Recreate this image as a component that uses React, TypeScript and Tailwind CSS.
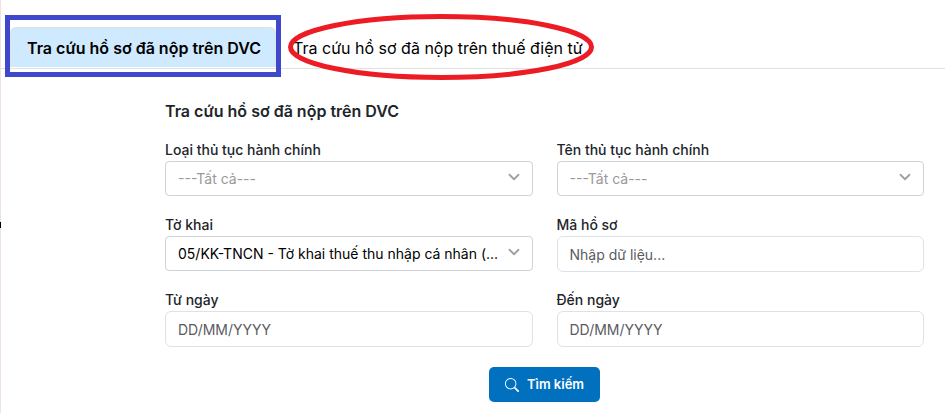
import { ChevronDown } from "lucide-react";
import { BsSearch } from "react-icons/bs";

type Field = {
  id: string;
  label: string;
  kind: "select" | "input";
  text: string;
  filled?: boolean;
};

const fields: Field[] = [
  { id: "loai-thu-tuc", label: "Loại thủ tục hành chính", kind: "select", text: "---Tất cả---" },
  { id: "ten-thu-tuc", label: "Tên thủ tục hành chính", kind: "select", text: "---Tất cả---" },
  {
    id: "to-khai",
    label: "Tờ khai",
    kind: "select",
    text: "05/KK-TNCN - Tờ khai thuế thu nhập cá nhân (...",
    filled: true,
  },
  { id: "ma-ho-so", label: "Mã hồ sơ", kind: "input", text: "Nhập dữ liệu..." },
  { id: "tu-ngay", label: "Từ ngày", kind: "input", text: "DD/MM/YYYY" },
  { id: "den-ngay", label: "Đến ngày", kind: "input", text: "DD/MM/YYYY" },
];

function FormField({ field }: { field: Field }) {
  return (
    <div className="flex flex-col min-w-0">
      <label htmlFor={field.id} className="text-sm leading-5 mb-px font-medium text-[#212529]">
        {field.label}
      </label>
      {field.kind === "select" ? (
        <div className="relative">
          <select
            id={field.id}
            className={`block w-full h-[35px] appearance-none rounded-[4px] border border-[#ced4da] bg-white pl-3 pr-6 text-sm text-ellipsis
              ${field.filled ? "text-black" : "text-[#999999]"}`}
          >
            <option>{field.text}</option>
          </select>
          <ChevronDown
            size={18}
            strokeWidth={2.4}
            className="absolute right-2.5 top-[7px] text-[#a0a0a0] pointer-events-none"
          />
        </div>
      ) : (
        <input
          id={field.id}
          type="text"
          placeholder={field.text}
          className="block w-full h-9 rounded-md border border-[#dee2e6] bg-white px-3 text-sm text-black placeholder:text-[#595c5f]"
        />
      )}
    </div>
  );
}

export default function App() {
  return (
    <div className="relative min-h-screen bg-white border-l border-[#f0e1e6] pt-[27px] font-['Inter','Liberation_Sans',sans-serif]">
      {/* Tabs */}
      <nav className="flex border-b border-[#dee2e6] pl-[9px] pb-px">
        <div className="relative">
          <button
            type="button"
            className="h-10 rounded-t-md border border-b-0 border-[#dee2e6] bg-[#cfe9ff] pl-4 pr-3.5 text-base font-semibold text-black"
          >
            Tra cứu hồ sơ đã nộp trên DVC
          </button>
          {/* Blue highlight box */}
          <span className="absolute -inset-x-[5px] -top-3 -bottom-2.5 border-[5px] border-[#3f48cc] pointer-events-none" />
        </div>
        <div className="relative">
          <button type="button" className="h-10 border border-b-0 border-transparent px-4 text-base text-black">
            Tra cứu hồ sơ đã nộp trên thuế điện tử
          </button>
          {/* Red ellipse */}
          <svg
            className="absolute left-3 -top-[13px] w-[306px] h-[66px] pointer-events-none"
            viewBox="0 0 306 66"
            fill="none"
          >
            <ellipse cx="153" cy="33" rx="150.5" ry="30.5" stroke="#ed1c24" strokeWidth="5" />
          </svg>
        </div>
      </nav>

      {/* Small mark on the left edge */}
      <span className="absolute -left-px top-[222px] w-px h-1.5 bg-black" />

      {/* Search form */}
      <form className="ml-[164px] mr-[21px] pt-8" onSubmit={(e) => e.preventDefault()}>
        <h2 className="text-base leading-5 font-semibold text-[#212529] mb-[19px]">
          Tra cứu hồ sơ đã nộp trên DVC
        </h2>
        <div className="grid grid-cols-2 gap-x-6 auto-rows-[57px] gap-y-[18px]">
          {fields.map((field) => (
            <FormField key={field.id} field={field} />
          ))}
        </div>
        <div className="flex justify-center mt-5">
          <button
            type="submit"
            className="flex items-center gap-2 h-[35px] rounded-[5px] bg-[#0070bf] px-4 text-[13px] font-semibold text-white"
          >
            <BsSearch size={14} />
            Tìm kiếm
          </button>
        </div>
      </form>
    </div>
  );
}
